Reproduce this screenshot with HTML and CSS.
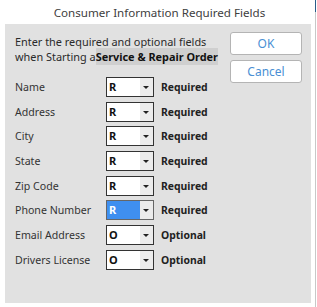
FILE: index.html
```html
<!DOCTYPE html>
<html>
<head>
<meta charset="utf-8">
<link rel="stylesheet" href="styles.css">
</head>
<body>
<div class="window">
  <div class="title">Consumer Information Required Fields</div>
  <div class="panel">
    <div class="top">
      <div class="intro">Enter the required and optional fields<br>when Starting a<span class="hl">Service &amp; Repair Order</span></div>
      <div class="buttons">
        <button class="btn">OK</button>
        <button class="btn">Cancel</button>
      </div>
    </div>
    <div class="fields">
      <div class="label">Name</div><div class="sel"><span class="val">R</span><span class="arrow"></span></div><div class="status">Required</div>
      <div class="label">Address</div><div class="sel"><span class="val">R</span><span class="arrow"></span></div><div class="status">Required</div>
      <div class="label">City</div><div class="sel"><span class="val">R</span><span class="arrow"></span></div><div class="status">Required</div>
      <div class="label">State</div><div class="sel"><span class="val">R</span><span class="arrow"></span></div><div class="status">Required</div>
      <div class="label">Zip Code</div><div class="sel"><span class="val">R</span><span class="arrow"></span></div><div class="status">Required</div>
      <div class="label">Phone Number</div><div class="sel active"><span class="val">R</span><span class="arrow"></span></div><div class="status">Required</div>
      <div class="label">Email Address</div><div class="sel"><span class="val">O</span><span class="arrow"></span></div><div class="status">Optional</div>
      <div class="label">Drivers License</div><div class="sel"><span class="val">O</span><span class="arrow"></span></div><div class="status">Optional</div>
    </div>
  </div>
</div>
<div class="edge"></div>
</body>
</html>
```
FILE: styles.css
```css
html, body {
  margin: 0;
  padding: 0;
  background: #ffffff;
  width: 317px;
  height: 307px;
  overflow: hidden;
}
body {
  position: relative;
  font-family: "Noto Sans", "Open Sans", sans-serif;
  color: #333;
}
.window {
  width: 311px;
  padding-left: 5px;
}
.title {
  height: 24px;
  line-height: 25px;
  text-align: center;
  font-size: 11.6px;
  color: #404040;
  padding-right: 2px;
  box-sizing: border-box;
}
.panel {
  background: #e1e1e1;
  width: 306px;
  height: 279px;
  box-sizing: border-box;
  padding: 8px 9px 0 10px;
}
.top {
  display: flex;
  justify-content: space-between;
}
.intro {
  font-size: 10.9px;
  line-height: 15px;
  color: #2a2a2a;
  padding-top: 2px;
}
.hl {
  background: #cfcfcf;
  font-weight: bold;
  color: #111;
  padding: 1px 0;
}
.buttons {
  display: flex;
  flex-direction: column;
  gap: 5px;
}
.btn {
  width: 72px;
  height: 23px;
  background: #fff;
  border: 1px solid #b4b4b4;
  border-radius: 3px;
  font-family: "Noto Sans", "Open Sans", sans-serif;
  font-size: 12px;
  color: #4a8fd4;
  padding: 0;
}
.fields {
  display: grid;
  grid-template-columns: 91px 48px auto;
  row-gap: 4.7px;
  align-items: center;
  margin-top: -6px;
}
.label {
  font-size: 10.6px;
  color: #333;
}
.sel {
  height: 20px;
  box-sizing: border-box;
  border: 1px solid #333;
  background: #fff;
  display: flex;
}
.val {
  flex: 1;
  font-size: 11px;
  font-weight: bold;
  line-height: 18px;
  padding-left: 2px;
  color: #111;
}
.arrow {
  width: 13px;
  background: #ececec;
  position: relative;
}
.arrow::after {
  content: "";
  position: absolute;
  left: 3px;
  top: 8px;
  border-left: 3px solid transparent;
  border-right: 3px solid transparent;
  border-top: 3px solid #222;
}
.sel.active {
  border-color: #666;
}
.sel.active .val {
  background: #3f8ff0;
  color: #fff;
}
.status {
  font-size: 10.4px;
  font-weight: bold;
  color: #222;
  padding-left: 7px;
}
.edge {
  position: absolute;
  left: 315px;
  top: 0;
  width: 1px;
  height: 307px;
  background: linear-gradient(#2a5d8a 0, #2a5d8a 12px, #c8c8c8 12px);
}
```
